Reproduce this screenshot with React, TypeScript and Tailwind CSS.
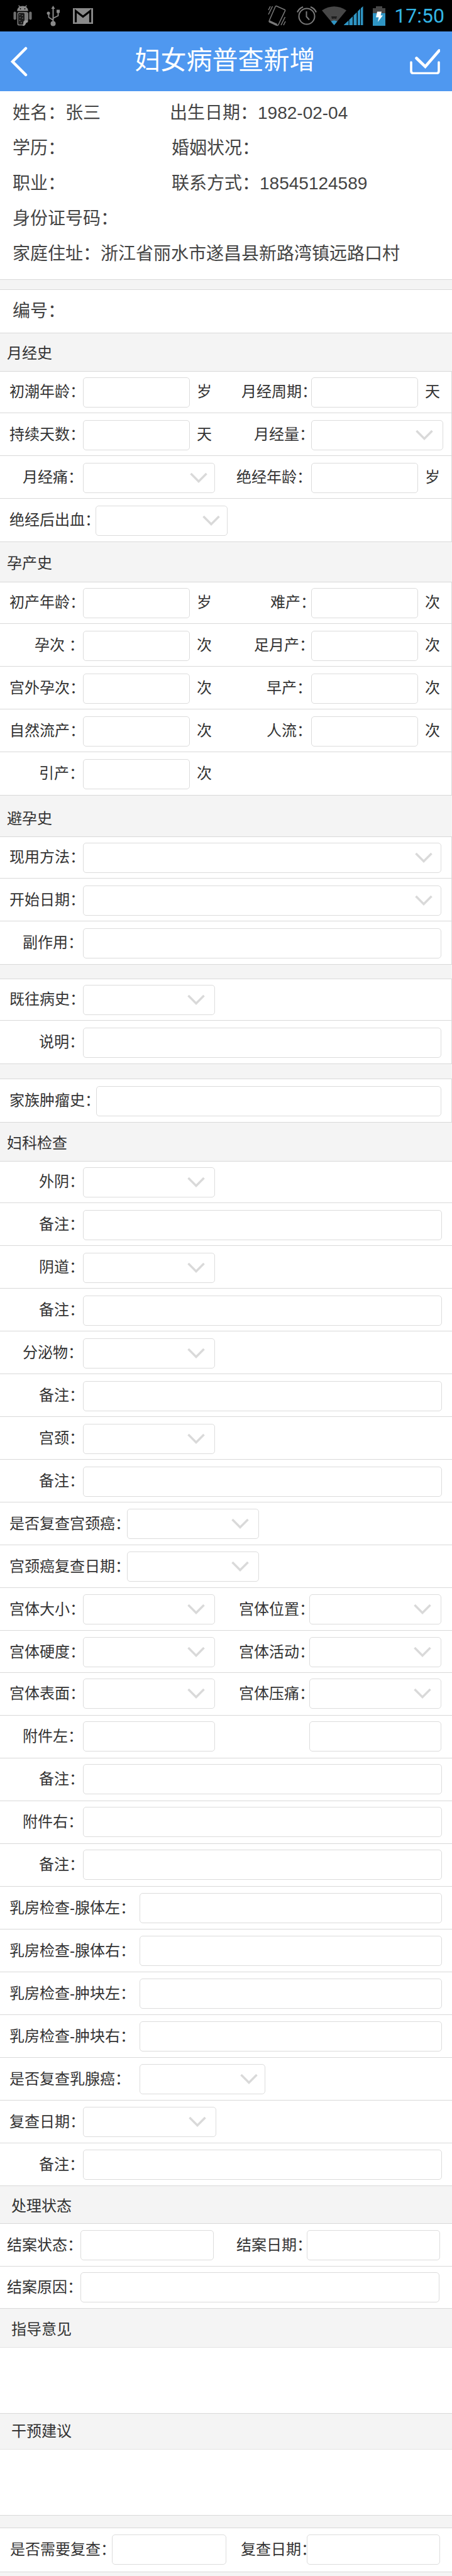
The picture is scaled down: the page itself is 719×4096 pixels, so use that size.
import React, { useId } from "react";

/* ---------- status bar icons ---------- */

function AndroidIcon() {
  return (
    <svg className="h-[34px] w-[30px]" viewBox="0 0 30 34" fill="#8a8a8a" aria-hidden="true">
      <path d="M6 9.500a9 8 0 0 1 18 0z" />
      <path d="M9 1l2.500 3M21 1l-2.500 3" stroke="#8a8a8a" strokeWidth="1.300" strokeLinecap="round" />
      <circle cx="11.500" cy="6" r="0.900" fill="#000" />
      <circle cx="18.500" cy="6" r="0.900" fill="#000" />
      <rect x="0.500" y="10.500" width="4.200" height="13" rx="2" fill="#6f6f6f" />
      <rect x="25.300" y="10.500" width="4.200" height="13" rx="2" fill="#6f6f6f" />
      <path d="M6.500 13.500q0-2.500 2.500-2.500h12q3 0 3 3v9l-6 9.500h-9q-2.500 0-2.500-2.500z" fill="#7b7b7b" />
      <path d="M8 14.500q0-2 2-2h6q2 0 2 2v10l-2 2v4.500h-6q-2 0-2-2z" fill="#1c1c1c" />
      <g fill="#8a8a8a">
        <circle cx="10.500" cy="15.500" r="0.800" />
        <circle cx="14.500" cy="16.500" r="0.800" />
        <circle cx="11" cy="20" r="0.800" />
        <circle cx="15" cy="21" r="0.800" />
        <circle cx="10.500" cy="24.500" r="0.800" />
        <circle cx="13" cy="28" r="0.800" />
      </g>
      <path d="M18 24.500h6l-1 3-2.500 1-1.500 3-2 1.500h-2l1-3.500z" fill="#9a9a9a" />
    </svg>
  );
}

function UsbIcon() {
  return (
    <svg className="h-[34px] w-[22px]" viewBox="0 0 22 34" fill="#8a8a8a" stroke="#8a8a8a" aria-hidden="true">
      <path d="M10.500 30V4" strokeWidth="2" fill="none" />
      <path d="M10.500 1l3 5h-6z" stroke="none" />
      <path d="M10.500 24L3.500 19.500V13M10.500 21l8-4V11" strokeWidth="1.800" fill="none" />
      <circle cx="3" cy="13" r="2.500" stroke="none" />
      <rect x="16" y="7.500" width="5" height="5" stroke="none" />
      <circle cx="10.500" cy="29.500" r="4" stroke="none" />
    </svg>
  );
}

function MailIcon() {
  return (
    <svg className="h-[25px] w-8" viewBox="0 0 32 25" aria-hidden="true">
      <rect width="32" height="25" fill="#8a8a8a" />
      <path d="M4.500 22.500V4.500L16 13.500 27.500 4.500V22.500" fill="none" stroke="#000" strokeWidth="3.200" />
    </svg>
  );
}

function VibrateIcon() {
  return (
    <svg className="h-[34px] w-[29px]" viewBox="0 0 29 34" fill="none" stroke="#7a7a7a" strokeWidth="1.500" aria-hidden="true">
      <path d="M13.500 1.500L27 7.500q1 .5.500 1.700L17 31q-1 2-2.500 1.200L3 27q-1.500-.7-.8-2L12 2.500q.5-1.300 1.500-1z" />
      <path d="M2.500 26L14.500 31.500" strokeWidth="3.500" />
      <path d="M1 8l3-6M1 15L7.500 2M28 26l-3 6M27.500 19L21 32" />
    </svg>
  );
}

function AlarmIcon() {
  return (
    <svg className="h-[30px] w-8" viewBox="0 0 32 30" fill="none" stroke="#7a7a7a" strokeWidth="2" aria-hidden="true">
      <circle cx="16" cy="16" r="12.500" />
      <path d="M15.500 8v8.500l4.500 5" />
      <path d="M1 9.500Q4 3 10 1M31 9.500Q28 3 22 1" strokeWidth="2.200" />
    </svg>
  );
}

function SignalIcon() {
  return (
    <svg className="h-[30px] w-[66px]" viewBox="0 0 66 30" aria-hidden="true">
      <path d="M0 6.500Q19.500-6 39 6.500L19.500 30z" fill="#474747" />
      <path d="M15 16h9l-1 4q-3.500-1-7 0z" fill="#1e1e1e" />
      <path d="M14.500 24q5-3 10 0l-5 6z" fill="#2f95c4" />
      <path d="M35 30v-.5l7.500-7V30zM43.500 30v-8.500l5.500-5.500V30zM50.500 30V14.500l5-5V30zM57 30V8l4-4v26zM62 30V3l3.500-3v30z" fill="#2f95c4" />
    </svg>
  );
}

function BatteryIcon() {
  return (
    <svg className="h-[31px] w-5" viewBox="0 0 20 31" aria-hidden="true">
      <path d="M5 0h10v3h5v9H0V3h5z" fill="#474747" />
      <rect y="11" width="20" height="20" fill="#2f95c4" />
      <path d="M7 8.500h7l-1.500 6H16L8 25l1.500-7.500H5z" fill="#fff" />
    </svg>
  );
}

function StatusBar() {
  return (
    <div className="flex h-[50px] items-center bg-black pr-3 pl-[21px]">
      <div className="flex flex-1 items-center">
        <AndroidIcon />
        <span className="ml-[23px] flex">
          <UsbIcon />
        </span>
        <span className="ml-5 flex">
          <MailIcon />
        </span>
      </div>
      <VibrateIcon />
      <span className="ml-[17px] flex">
        <AlarmIcon />
      </span>
      <span className="ml-2 flex">
        <SignalIcon />
      </span>
      <span className="ml-[15px] flex">
        <BatteryIcon />
      </span>
      <time className="ml-[14px] font-[Roboto,sans-serif] text-[32px] leading-8 text-[#33b5e5]">17:50</time>
    </div>
  );
}

function TitleBar() {
  return (
    <header className="flex h-[95px] items-center bg-[#4f98f0] pr-[19px] pl-4">
      <div className="flex flex-1">
        <button type="button" aria-label="返回">
          <svg className="h-12 w-7" viewBox="0 0 28 48" fill="none" stroke="#fff" strokeWidth="4.500" strokeLinecap="round">
            <path d="M25 3L4 24l21 21" strokeLinejoin="miter" />
          </svg>
        </button>
      </div>
      <h1 className="pb-[3px] text-[41px] leading-[60px] text-white">妇女病普查新增</h1>
      <div className="flex flex-1 justify-end">
        <button type="button" aria-label="保存">
          <svg className="h-10 w-12" viewBox="0 0 48 40" fill="none" stroke="#fff" strokeLinecap="round">
            <path d="M2 21v14q0 3.500 3.500 3.500h37q3.500 0 3.500-3.500V21" strokeWidth="3.600" />
            <path d="M10.500 14.500L24.500 28 46.500 2.500" strokeWidth="4.600" strokeLinejoin="miter" />
          </svg>
        </button>
      </div>
    </header>
  );
}

/* ---------- form building blocks ---------- */

type FieldProps = {
  label: string;
  /** width and left padding of the label cell */
  cell: string;
  /** width of the box */
  box: string;
  select?: boolean;
  /** distance of the arrow from the right edge of the box */
  arrow?: string;
  unit?: string;
  /** text sits slightly above the middle of the box */
  raised?: boolean;
};

function Field({ label, cell, box, select, arrow = "right-4", unit, raised = true }: FieldProps) {
  const id = useId();
  const control = "block h-12 w-full rounded-[5px] border border-[#dcdcdc] bg-transparent px-3 outline-none";
  return (
    <>
      <label htmlFor={id} className={`shrink-0 whitespace-nowrap ${raised ? "pb-[2px]" : ""} ${cell}`}>
        {label}
      </label>
      <div className={`relative ${box}`}>
        {select ? (
          <>
            <select id={id} className={`appearance-none ${control}`} />
            <svg
              className={`pointer-events-none absolute top-4 h-4 w-7 ${arrow}`}
              viewBox="0 0 28 16"
              fill="none"
              stroke="#d9d9d9"
              strokeWidth="3.500"
              aria-hidden="true"
            >
              <path d="M1.500 1L14 13.500 26.500 1" />
            </svg>
          </>
        ) : (
          <input id={id} type="text" className={control} />
        )}
      </div>
      {unit && <span className={`pl-[11px] ${raised ? "pb-[2px]" : ""}`}>{unit}</span>}
    </>
  );
}

function Row({ pad, left, right }: { pad: string; left: React.ReactNode; right?: React.ReactNode }) {
  return (
    <div className={`flex border-t border-[#d9d9d9] ${pad}`}>
      {right ? (
        <>
          <div className="flex w-90 items-center">{left}</div>
          <div className="flex flex-1 items-center">{right}</div>
        </>
      ) : (
        <div className="flex flex-1 items-center">{left}</div>
      )}
    </div>
  );
}

function Heading({ className, children }: { className: string; children: React.ReactNode }) {
  return <h2 className={`flex items-center border-t border-[#d9d9d9] bg-[#f4f4f4] ${className}`}>{children}</h2>;
}

function Gap({ className }: { className: string }) {
  return <div className={`border-t border-[#d9d9d9] bg-[#f4f4f4] ${className}`} />;
}

const FIRST = "pt-[9px] pb-2";
const MIDDLE = "pt-[11px] pb-2";
const LAST = "pt-[11px] pb-[9px]";
const EVEN = "pt-[10px] pb-[9px]";
const HIGH = "pt-[9px] pb-[10px]";

const L4 = "w-[132px] pl-[15px]";
const L3 = "w-[132px] pl-9";
const L2 = "w-[132px] pl-[62px]";
const SHORT = "w-[170px]";
const MEDIUM = "w-[210px]";
const FULL = "mr-4 flex-1";

function Remark({ pad, raised = true, label = "备注：" }: { pad: string; raised?: boolean; label?: string }) {
  return <Row pad={pad} left={<Field label={label} cell={L2} box={FULL} raised={raised} />} />;
}

function Info({ label, value = "" }: { label: string; value?: string }) {
  return (
    <div className="flex whitespace-nowrap">
      <dt>{label}</dt>
      <dd>{value}</dd>
    </div>
  );
}

const breastChecks = ["乳房检查-腺体左：", "乳房检查-腺体右：", "乳房检查-肿块左：", "乳房检查-肿块右："];

const uterusChecks = [
  { left: "宫体大小：", right: "宫体位置：", pad: "pt-[10px] pb-[9px]" },
  { left: "宫体硬度：", right: "宫体活动：", pad: "pt-[10px] pb-2" },
  { left: "宫体表面：", right: "宫体压痛：", pad: "pt-[9px] pb-[10px]" },
];

const organs = [
  { name: "外阴：", cell: L2 },
  { name: "阴道：", cell: L2 },
  { name: "分泌物：", cell: L3 },
  { name: "宫颈：", cell: L2 },
];

export default function App() {
  return (
    <main
      lang="zh-CN"
      className="min-h-screen w-full bg-white font-['Liberation_Sans','Noto_Sans_CJK_SC',sans-serif] text-[24px] leading-8 text-[#333]"
    >
      <StatusBar />
      <TitleBar />

      <dl className="flex flex-col pt-[7px] pb-3 pl-5 text-[28px] leading-[56px] text-[#444]">
        <div className="flex">
          <div className="w-[250px]">
            <Info label="姓名：" value="张三" />
          </div>
          <Info label="出生日期：" value="1982-02-04" />
        </div>
        <div className="flex">
          <div className="w-[253px]">
            <Info label="学历：" />
          </div>
          <Info label="婚姻状况：" />
        </div>
        <div className="flex">
          <div className="w-[253px]">
            <Info label="职业：" />
          </div>
          <Info label="联系方式：" value="18545124589" />
        </div>
        <Info label="身份证号码：" />
        <Info label="家庭住址：" value="浙江省丽水市遂昌县新路湾镇远路口村" />
      </dl>

      <Gap className="h-4" />
      <div className="flex h-[69px] items-center border-t border-[#d9d9d9] pl-5 text-[28px] text-[#444]">编号：</div>

      <Heading className="h-[61px] pt-1 pl-[11px]">月经史</Heading>
      <section className="border-r border-[#d9d9d9]">
        <Row
          pad={FIRST}
          left={<Field label="初潮年龄：" cell={L4} box={SHORT} unit="岁" />}
          right={<Field label="月经周期：" cell="w-[135px] pl-6" box={SHORT} unit="天" />}
        />
        <Row
          pad={MIDDLE}
          left={<Field label="持续天数：" cell={L4} box={SHORT} unit="天" />}
          right={<Field label="月经量：" cell="w-[135px] pl-11" box={MEDIUM} select />}
        />
        <Row
          pad={MIDDLE}
          left={<Field label="月经痛：" cell={L3} box={MEDIUM} select arrow="right-3" />}
          right={<Field label="绝经年龄：" cell="w-[135px] pl-4" box={SHORT} unit="岁" />}
        />
        <Row
          pad={LAST}
          left={<Field label="绝经后出血：" cell="w-[152px] pl-[15px]" box={MEDIUM} select arrow="right-3" />}
        />
      </section>

      <Heading className="h-16 pt-1 pl-[11px]">孕产史</Heading>
      <section className="border-r border-[#d9d9d9]">
        <Row
          pad={FIRST}
          left={<Field label="初产年龄：" cell={L4} box={SHORT} unit="岁" />}
          right={<Field label="难产：" cell="w-[135px] pl-[70px]" box={SHORT} unit="次" />}
        />
        <Row
          pad={MIDDLE}
          left={<Field label="孕次 ：" cell="w-[132px] pl-[55px]" box={SHORT} unit="次" />}
          right={<Field label="足月产：" cell="w-[135px] pl-11" box={SHORT} unit="次" />}
        />
        <Row
          pad={MIDDLE}
          left={<Field label="宫外孕次：" cell={L4} box={SHORT} unit="次" />}
          right={<Field label="早产：" cell="w-[135px] pl-16" box={SHORT} unit="次" />}
        />
        <Row
          pad={MIDDLE}
          left={<Field label="自然流产：" cell={L4} box={SHORT} unit="次" />}
          right={<Field label="人流：" cell="w-[135px] pl-16" box={SHORT} unit="次" />}
        />
        <Row pad={LAST} left={<Field label="引产：" cell={L2} box={SHORT} unit="次" />} />
      </section>

      <Heading className="h-[66px] pt-2 pl-[11px]">避孕史</Heading>
      <section className="border-r border-[#d9d9d9]">
        <Row pad={FIRST} left={<Field label="现用方法：" cell={L4} box={FULL} select arrow="right-3.5" />} />
        <Row pad={MIDDLE} left={<Field label="开始日期：" cell={L4} box={FULL} select arrow="right-3.5" />} />
        <Row pad={LAST} left={<Field label="副作用：" cell={L3} box={FULL} />} />
      </section>

      <Gap className="h-[23px]" />
      <section className="border-r border-[#d9d9d9]">
        <Row pad={FIRST} left={<Field label="既往病史：" cell={L4} box={MEDIUM} select />} />
        <Remark pad={LAST} label="说明：" />
      </section>

      <Gap className="h-6" />
      <section className="border-r border-[#d9d9d9]">
        <Row pad={LAST} left={<Field label="家族肿瘤史：" cell="w-[153px] pl-[15px]" box={FULL} />} />
      </section>

      <Heading className="h-[62px] pt-1 pl-[11px]">妇科检查</Heading>
      <section>
        {organs.map((organ, i) => (
          <React.Fragment key={organ.name}>
            <Row
              pad={i === 0 ? FIRST : MIDDLE}
              left={<Field label={organ.name} cell={organ.cell} box={MEDIUM} select />}
            />
            <Remark pad={MIDDLE} />
          </React.Fragment>
        ))}
        <Row
          pad={EVEN}
          left={<Field label="是否复查宫颈癌：" cell="w-[202px] pl-[15px]" box={MEDIUM} select raised={false} />}
        />
        <Row
          pad={EVEN}
          left={<Field label="宫颈癌复查日期：" cell="w-[202px] pl-[15px]" box={MEDIUM} select raised={false} />}
        />
        {uterusChecks.map((row) => (
          <Row
            key={row.left}
            pad={row.pad}
            left={<Field label={row.left} cell={L4} box={MEDIUM} select raised={false} />}
            right={<Field label={row.right} cell="w-[132px] pl-5" box={MEDIUM} select raised={false} />}
          />
        ))}
        <Row
          pad={HIGH}
          left={<Field label="附件左：" cell={L3} box={MEDIUM} raised={false} />}
          right={<Field label="" cell="w-[132px]" box={MEDIUM} raised={false} />}
        />
        <Remark pad={HIGH} raised={false} />
        <Row pad={HIGH} left={<Field label="附件右：" cell={L3} box={FULL} raised={false} />} />
        <Remark pad={HIGH} raised={false} />
        {breastChecks.map((label) => (
          <Row
            key={label}
            pad={EVEN}
            left={<Field label={label} cell="w-[222px] pl-[15px]" box={FULL} raised={false} />}
          />
        ))}
        <Row
          pad={EVEN}
          left={
            <Field
              label="是否复查乳腺癌："
              cell="w-[222px] pl-[15px]"
              box="w-[200px]"
              select
              arrow="right-3"
              raised={false}
            />
          }
        />
        <Row
          pad={EVEN}
          left={<Field label="复查日期：" cell={L4} box="w-[212px]" select raised={false} />}
        />
        <Remark pad={EVEN} raised={false} />
      </section>

      <Heading className="h-[60px] pt-1 pl-[18px]">处理状态</Heading>
      <section>
        <Row
          pad={EVEN}
          left={<Field label="结案状态：" cell="w-32 pl-[11px]" box="w-[212px]" raised={false} />}
          right={<Field label="结案日期：" cell="w-32 pl-4" box="w-[212px]" raised={false} />}
        />
        <Row
          pad="pt-[9px] pb-[9px]"
          left={<Field label="结案原因：" cell="w-32 pl-[11px]" box="mr-5 flex-1" raised={false} />}
        />
      </section>

      <Heading className="h-[62px] pt-1 pl-[18px]">指导意见</Heading>
      <textarea
        aria-label="指导意见"
        className="block h-[105px] w-full resize-none border-t border-[#e4e4e4] px-5 py-2 outline-none"
      />

      <Heading className="h-[57px] pl-[18px]">干预建议</Heading>
      <textarea
        aria-label="干预建议"
        className="block h-[105px] w-full resize-none border-t border-[#e4e4e4] px-5 py-2 outline-none"
      />

      <Gap className="h-5" />
      <Row
        pad="pt-[10px] pb-[11px]"
        left={<Field label="是否需要复查：" cell="w-[178px] pl-4" box="w-[182px]" raised={false} />}
        right={<Field label="复查日期：" cell="w-32 pl-[23px]" box="w-[212px]" raised={false} />}
      />
      <Gap className="h-2" />
    </main>
  );
}
